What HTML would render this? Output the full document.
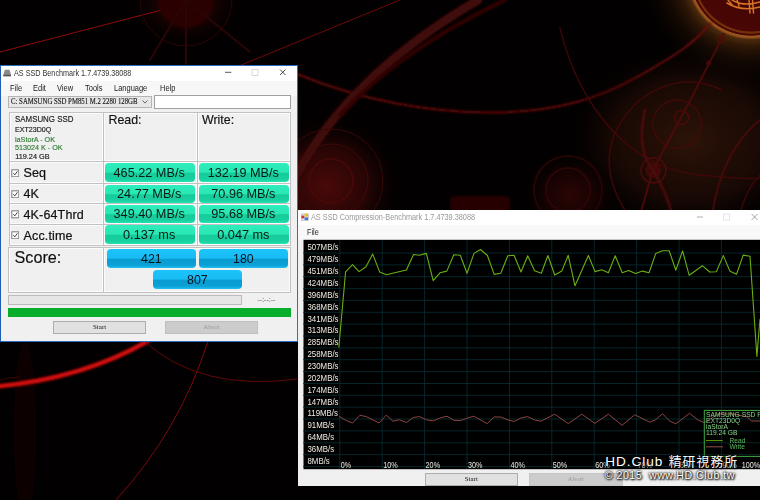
<!DOCTYPE html>
<html><head><meta charset="utf-8"><title>AS SSD Benchmark</title>
<style>
html,body{margin:0;padding:0;background:#000;}
body{width:760px;height:500px;overflow:hidden;position:relative;font-family:"Liberation Sans",sans-serif;}
.abs{position:absolute;}
#bg{position:absolute;left:0;top:0;width:760px;height:500px;}
/* ---------- window 1 ---------- */
#w1{position:absolute;left:0;top:65.3px;width:295.6px;height:274.4px;border:1px solid #2a6cc4;border-left-color:#1f5fb0;border-right-color:#4a6a9c;background:#f0f0f0;filter:blur(.3px);}
#w1 .title{position:absolute;left:0;top:0;width:100%;height:14.5px;background:#fff;}
#w1 .title span{position:absolute;left:12.8px;top:2.6px;font-size:8.2px;color:#333;white-space:nowrap;transform:scaleX(.883);transform-origin:0 0;}
#w1 .menu{position:absolute;left:0;top:14.5px;width:100%;height:15px;background:#f7f7f7;font-size:8.6px;color:#1a1a1a;}
#w1 .menu span{position:absolute;top:2px;transform:scaleX(.87);transform-origin:0 0;}
.t{position:absolute;white-space:nowrap;line-height:1;}
#w1 .t{-webkit-text-stroke:.15px currentColor;}
.combo{position:absolute;left:7px;top:29.4px;width:141.5px;height:10px;border:1px solid #b4b4b4;background:#e7e7e7;}
.tbox{position:absolute;left:152.8px;top:29.2px;width:135.2px;height:11.2px;border:1px solid #a0a0a0;background:#fff;}
.serif{font-family:"Liberation Serif",serif;}
.cell{position:absolute;background:#f0f0f0;border:1px solid #c2c2c2;box-shadow:inset 0 0 0 1px rgba(255,255,255,.75);}
.gbtn{position:absolute;height:20.2px;width:89.5px;border-radius:4px;background:linear-gradient(#2eecbc 0%,#2ae8b4 48%,#16cc9a 54%,#18cfa0 85%,#24e4b0 100%);color:#0a1a14;font-size:12.7px;text-align:center;text-indent:-1.2px;white-space:nowrap;}
.bbtn{position:absolute;height:19.4px;width:88.4px;border-radius:4px;background:linear-gradient(#1cc4fa 0%,#18bcf4 48%,#0a9cd0 54%,#0ca0d6 85%,#20c0f0 100%);color:#06141c;font-size:12.4px;text-align:center;line-height:20px;}
.cb{position:absolute;left:10px;width:6.4px;height:6.4px;border:1px solid #555;background:#fff;font-size:7px;line-height:6px;color:#1a1a1a;text-align:center;}
.rowl{-webkit-text-stroke:.22px #111;position:absolute;left:22.5px;font-size:12.5px;letter-spacing:.15px;color:#111;white-space:nowrap;}
.btn{position:absolute;border:1px solid #adadad;background:#e1e1e1;font-family:"Liberation Serif",serif;font-size:7px;text-align:center;color:#111;}
/* ---------- window 2 ---------- */
#w2{position:absolute;left:297.5px;top:209.6px;width:470px;height:276.8px;background:#f0f0f0;filter:blur(.3px);}
#w2 .title{position:absolute;left:0;top:0;width:100%;height:15.5px;background:#fff;}
#w2 .menu{position:absolute;left:0;top:15.5px;width:100%;height:15px;background:#f8f8f8;}
svg text{font-family:"Liberation Sans",sans-serif;}
</style></head><body>
<!-- wallpaper -->
<svg id="bg" viewBox="0 0 760 500">
<defs>
<radialGradient id="g1" cx="751" cy="-25" r="112" gradientUnits="userSpaceOnUse"><stop offset="0" stop-color="#400303"/><stop offset="0.5000" stop-color="#480704"/><stop offset="0.5089" stop-color="#743008"/><stop offset="0.5205" stop-color="#743008"/><stop offset="0.5268" stop-color="#480905"/><stop offset="0.5384" stop-color="#480905"/><stop offset="0.5446" stop-color="#9a561e"/><stop offset="0.5589" stop-color="#94501c"/><stop offset="0.5759" stop-color="#4c2a0b"/><stop offset="0.6429" stop-color="#321907" stop-opacity=".9"/><stop offset="0.7679" stop-color="#1e0e04" stop-opacity=".6"/><stop offset="1" stop-color="#0a0401" stop-opacity="0"/></radialGradient>
<radialGradient id="g2" cx="0.5" cy="0.5" r="0.5"><stop offset="0" stop-color="#4a0909"/><stop offset="0.5" stop-color="#300606" stop-opacity=".85"/><stop offset="1" stop-color="#000" stop-opacity="0"/></radialGradient>
<radialGradient id="g3" cx="0.5" cy="0.5" r="0.5"><stop offset="0" stop-color="#2c0505"/><stop offset="0.5" stop-color="#1c0303" stop-opacity=".8"/><stop offset="1" stop-color="#000" stop-opacity="0"/></radialGradient>
<radialGradient id="g4" cx="0.5" cy="0.5" r="0.5"><stop offset="0" stop-color="#2c1308"/><stop offset="0.6" stop-color="#1c0a05" stop-opacity=".85"/><stop offset="1" stop-color="#000" stop-opacity="0"/></radialGradient>
<filter id="bl"><feGaussianBlur stdDeviation="1"/></filter>
<filter id="bl2"><feGaussianBlur stdDeviation="2.5"/></filter>
</defs>
<rect width="760" height="500" fill="#020000"/>
<!-- hazes -->
<ellipse cx="690" cy="140" rx="130" ry="100" fill="url(#g4)"/>
<circle cx="751" cy="-25" r="112" fill="url(#g1)"/>
<ellipse cx="186" cy="2" rx="60" ry="48" fill="url(#g3)"/>
<ellipse cx="326" cy="186" rx="80" ry="74" fill="url(#g2)"/>
<ellipse cx="570" cy="195" rx="50" ry="45" fill="url(#g3)"/>
<ellipse cx="25" cy="430" rx="11" ry="90" fill="#100202" filter="url(#bl2)"/>
<g fill="none" stroke-linecap="round">
<!-- top-left lines -->
<path d="M0 52 L200 0" stroke="#900a0a" stroke-width="1"/>
<path d="M229 70 L400 0" stroke="#700808" stroke-width="1"/>
<circle cx="186" cy="0" r="28" fill="#2a0404" stroke="none" filter="url(#bl)"/>
<circle cx="186" cy="0" r="46" stroke="#2c0505" stroke-width="1"/>
<path d="M186 0L150 60M186 0L186 64M186 0L250 52" stroke="#2a0505" stroke-width="2"/>
<!-- bottom-left -->
<path d="M-10 387 Q80 380 148 341" stroke="#d40a0a" stroke-width="4.5" filter="url(#bl)"/>
<path d="M144 341 Q200 392 297 379" stroke="#600808" stroke-width="1"/>
<path d="M208 341 Q180 430 116 500" stroke="#7c0a0a" stroke-width="1"/>
<path d="M0 380 Q10 377 20 377" stroke="#3a0505" stroke-width="1"/>
<!-- middle top -->
<path d="M297 74 C360 100 430 113 494 112.500 S600 98 639 76 S694 43 711 23" stroke="#6a0a0a" stroke-width="2" filter="url(#bl)"/>
<path d="M297 174 Q350 75 478 0" stroke="#400707" stroke-width="9" filter="url(#bl)"/>
<path d="M340 115 Q400 50 505 0" stroke="#340606" stroke-width="4" filter="url(#bl)"/>
<circle cx="331" cy="181" r="22" stroke="#4a0909" stroke-width="1.5"/>
<circle cx="331" cy="181" r="37" stroke="#400808" stroke-width="1"/>
<circle cx="331" cy="181" r="52" stroke="#380707" stroke-width="1"/>
<rect x="450" y="196" width="60" height="16" rx="5" fill="#260505" stroke="none" filter="url(#bl)"/>
<circle cx="568" cy="190" r="22" stroke="#2c0505" stroke-width="2"/>
<circle cx="568" cy="190" r="34" stroke="#260404" stroke-width="2"/>
<!-- right -->
<g opacity=".78">
<path d="M560 28 Q575 90 612 130 T700 175 T760 178" stroke="#480808" stroke-width="1.5"/>
<circle cx="677" cy="124" r="24" stroke="#4c0909" stroke-width="1.3"/>
<circle cx="681.6" cy="117.6" r="7" stroke="#520a0a" stroke-width="1.5"/>
<circle cx="653.4" cy="170.3" r="12.5" stroke="#5a0a0a" stroke-width="1.5"/>
<circle cx="653.4" cy="170.3" r="8" fill="#4a0808" stroke="none"/>
<path d="M724 34 L693 95 L653 170 L640 215" stroke="#560a0a" stroke-width="2"/><circle cx="720.8" cy="39" r="4" stroke="#5a0c08" stroke-width="1.3"/><circle cx="708.8" cy="63" r="2.5" fill="#5a0a0a" stroke="none"/>
<path d="M645 110 Q636 150 653 170 Q668 195 672 215" stroke="#520a0a" stroke-width="3" filter="url(#bl)"/>
<path d="M628 215 Q585 150 640 100 Q680 70 722 90" stroke="#480808" stroke-width="1.5"/>
<path d="M712 215 Q722 150 760 120" stroke="#500a0a" stroke-width="2"/>
<path d="M740 215 Q745 190 760 175" stroke="#480808" stroke-width="1.5"/>
</g>
<!-- orange ornament -->
<path d="M727 3 Q742 12 760 7 M732 0 Q744 7 760 2 M749 0 L750 13 M752.5 0 L753.5 13 M728 0 L733 6 M737 0 L739 6" stroke="#e07828" stroke-width="1.5" opacity=".95"/>
</g>
</svg>

<!-- ================= WINDOW 1 ================= -->
<div id="w1">
 <div class="title">
  <svg class="abs" style="left:2px;top:2.6px" width="8.4" height="8" viewBox="0 0 9 8"><path d="M2 0.5h5l1.6 5.5v1.6h-8.2v-1.6z" fill="#8a8a8a"/><path d="M0.4 6h8.2v1.6h-8.2z" fill="#555"/></svg>
  <span>AS SSD Benchmark 1.7.4739.38088</span>
  <svg class="abs" style="left:223px;top:2px" width="66" height="9" viewBox="0 0 66 9"><g fill="none"><path d="M1 4.3h6.4" stroke="#333" stroke-width=".8"/><rect x="28" y="1.5" width="6" height="6" stroke="#d4d4d4" stroke-width=".9"/><path d="M56 1.5l5.5 5.5M61.500 1.5l-5.5 5.5" stroke="#2a2a2a" stroke-width=".85"/></g></svg>
 </div>
 <div class="menu"><span style="left:9px">File</span><span style="left:32px">Edit</span><span style="left:56px">View</span><span style="left:83.5px">Tools</span><span style="left:113px">Language</span><span style="left:158.5px">Help</span></div>
 <div class="combo"><span class="t serif" style="left:1.5px;top:1.5px;font-size:7.4px;color:#1a1a1a;transform:scaleX(.918);transform-origin:0 0;">C: SAMSUNG SSD PM851 M.2 2280 128GB</span>
  <svg class="abs" style="left:133px;top:3px" width="6" height="4" viewBox="0 0 6 4"><path d="M.5 .5l2.5 2.6l2.5-2.6" fill="none" stroke="#444" stroke-width=".8"/></svg></div>
 <div class="tbox"></div>

 <!-- table -->
 <div class="cell" style="left:8.0px;top:45.5px;width:92.7px;height:48.6px"></div>
 <div class="cell" style="left:101.7px;top:45.5px;width:93.1px;height:48.6px"></div>
 <div class="cell" style="left:195.8px;top:45.5px;width:92.4px;height:48.6px"></div>
 <div class="cell" style="left:8.0px;top:95.1px;width:92.7px;height:21.1px"></div>
 <div class="cell" style="left:101.7px;top:95.1px;width:93.1px;height:21.1px"></div>
 <div class="cell" style="left:195.8px;top:95.1px;width:92.4px;height:21.1px"></div>
 <div class="cell" style="left:8.0px;top:117.2px;width:92.7px;height:19.0px"></div>
 <div class="cell" style="left:101.7px;top:117.2px;width:93.1px;height:19.0px"></div>
 <div class="cell" style="left:195.8px;top:117.2px;width:92.4px;height:19.0px"></div>
 <div class="cell" style="left:8.0px;top:137.2px;width:92.7px;height:19.3px"></div>
 <div class="cell" style="left:101.7px;top:137.2px;width:93.1px;height:19.3px"></div>
 <div class="cell" style="left:195.8px;top:137.2px;width:92.4px;height:19.3px"></div>
 <div class="cell" style="left:8.0px;top:157.5px;width:92.7px;height:20.0px"></div>
 <div class="cell" style="left:101.7px;top:157.5px;width:93.1px;height:20.0px"></div>
 <div class="cell" style="left:195.8px;top:157.5px;width:92.4px;height:20.0px"></div>
 <div class="cell" style="left:7.0px;top:180.5px;width:93.9px;height:44.7px"></div>
 <div class="cell" style="left:101.9px;top:180.5px;width:186.4px;height:44.7px"></div>

 <span class="t" style="left:14px;top:49.2px;font-size:8.6px;color:#1a1a1a;transform:scaleX(.92);transform-origin:0 0;">SAMSUNG SSD</span>
 <span class="t" style="left:14px;top:61px;font-size:7.1px;color:#1a1a1a;">EXT23D0Q</span>
 <span class="t" style="left:14px;top:69.7px;font-size:7.2px;color:#2e7d32;">iaStorA - OK</span>
 <span class="t" style="left:14px;top:78.1px;font-size:7.2px;color:#2e7d32;">513024 K - OK</span>
 <span class="t" style="left:14.2px;top:87.1px;font-size:7.3px;color:#1a1a1a;">119.24 GB</span>
 <span class="t" style="left:107.5px;top:48.1px;font-size:12.4px;color:#111;">Read:</span>
 <span class="t" style="left:201px;top:48.1px;font-size:12.4px;color:#111;">Write:</span>

 <svg class="abs" style="left:9.6px;top:102.3px" width="8.6" height="8.6" viewBox="0 0 8.6 8.6"><rect x=".8" y=".8" width="7" height="7" fill="#fdfdfd" stroke="#7c7c7c" stroke-width="1"/><path d="M2.3 4.2l1.5 1.7l2.6-3.6" fill="none" stroke="#333" stroke-width=".9"/></svg><span class="rowl" style="top:99.7px">Seq</span>
 <svg class="abs" style="left:9.6px;top:123.3px" width="8.6" height="8.6" viewBox="0 0 8.6 8.6"><rect x=".8" y=".8" width="7" height="7" fill="#fdfdfd" stroke="#7c7c7c" stroke-width="1"/><path d="M2.3 4.2l1.5 1.7l2.6-3.6" fill="none" stroke="#333" stroke-width=".9"/></svg><span class="rowl" style="top:121px">4K</span>
 <svg class="abs" style="left:9.6px;top:143.8px" width="8.6" height="8.6" viewBox="0 0 8.6 8.6"><rect x=".8" y=".8" width="7" height="7" fill="#fdfdfd" stroke="#7c7c7c" stroke-width="1"/><path d="M2.3 4.2l1.5 1.7l2.6-3.6" fill="none" stroke="#333" stroke-width=".9"/></svg><span class="rowl" style="top:141.3px">4K-64Thrd</span>
 <svg class="abs" style="left:9.6px;top:164.3px" width="8.6" height="8.6" viewBox="0 0 8.6 8.6"><rect x=".8" y=".8" width="7" height="7" fill="#fdfdfd" stroke="#7c7c7c" stroke-width="1"/><path d="M2.3 4.2l1.5 1.7l2.6-3.6" fill="none" stroke="#333" stroke-width=".9"/></svg><span class="rowl" style="top:162.3px">Acc.time</span>

 <div class="gbtn" style="left:104px;top:96.3px;height:19.7px;line-height:21.0px">465.22 MB/s</div><div class="gbtn" style="left:198.2px;top:96.3px;height:19.7px;line-height:21.0px">132.19 MB/s</div>
 <div class="gbtn" style="left:104px;top:118.5px;height:18.2px;line-height:19.5px">24.77 MB/s</div><div class="gbtn" style="left:198.2px;top:118.5px;height:18.2px;line-height:19.5px">70.96 MB/s</div>
 <div class="gbtn" style="left:104px;top:138.7px;height:18.3px;line-height:19.6px">349.40 MB/s</div><div class="gbtn" style="left:198.2px;top:138.7px;height:18.3px;line-height:19.6px">95.68 MB/s</div>
 <div class="gbtn" style="left:104px;top:158.7px;height:19.3px;line-height:20.6px">0.137 ms</div><div class="gbtn" style="left:198.2px;top:158.7px;height:19.3px;line-height:20.6px">0.047 ms</div>

 <span class="t" style="left:13.5px;top:182.8px;font-size:16.2px;color:#111;">Score:</span>
 <div class="bbtn" style="left:106.2px;top:182.7px">421</div><div class="bbtn" style="left:198.2px;top:182.7px">180</div>
 <div class="bbtn" style="left:152.2px;top:203.3px">807</div>

 <div class="abs" style="left:6.8px;top:229px;width:232.5px;height:7.6px;border:1px solid #bcbcbc;background:#e6e6e6"></div>
 <span class="t" style="left:256.5px;top:229.8px;font-size:7px;color:#666;">--:--:--</span>
 <div class="abs" style="left:6.8px;top:241.8px;width:283.5px;height:9px;background:#09ad2c"></div>
 <div class="btn" style="left:52.2px;top:254.7px;width:90.8px;height:11px;line-height:11px">Start</div>
 <div class="btn" style="left:164px;top:254.7px;width:90.8px;height:11px;line-height:11px;background:#cccccc;border-color:#bfbfbf;color:#9a9a9a">Abort</div>
</div>

<!-- ================= WINDOW 2 ================= -->
<div id="w2">
 <div class="title">
  <svg class="abs" style="left:3px;top:3.5px" width="8" height="8" viewBox="0 0 8 8"><rect x="0" y="1" width="7.5" height="6.5" fill="#e8e8f0" stroke="#99a" stroke-width=".5"/><rect x="0.4" y="2.6" width="3" height="2.8" fill="#d03030"/><rect x="3.6" y="0.6" width="3.4" height="3" fill="#f0c020"/><rect x="3.6" y="4.4" width="3.4" height="2.6" fill="#3080e0"/></svg>
  <span class="t" style="left:13.5px;top:3.3px;font-size:8.4px;color:#999;transform:scaleX(.872);transform-origin:0 0;">AS SSD Compression-Benchmark 1.7.4739.38088</span>
  <svg class="abs" style="left:398px;top:3.5px" width="66" height="9" viewBox="0 0 66 9"><g fill="none"><path d="M0.8 4h6.2" stroke="#999" stroke-width=".8"/><rect x="27.6" y="1" width="6" height="6" stroke="#e2e2e2" stroke-width=".9"/><path d="M55.6 1l6 6M61.6 1l-6 6" stroke="#8a8a8a" stroke-width=".8"/></g></svg>
 </div>
 <div class="menu"><span class="t" style="left:9px;top:3.1px;font-size:8.6px;color:#2a2424;transform:scaleX(.85);transform-origin:0 0;">File</span></div>
 <div class="btn" style="left:127.5px;top:263.2px;width:90.5px;height:11px;line-height:11px">Start</div>
 <div class="btn" style="left:231.5px;top:263.2px;width:91.5px;height:11px;line-height:11px;background:#cccccc;border-color:#c4c4c4;color:#9a9a9a">Abort</div>
</div>
<!-- chart -->
<svg class="abs" style="left:0;top:0;filter:blur(.3px)" width="760" height="500" viewBox="0 0 760 500">
 <rect x="303.5" y="239.8" width="460" height="229.4" fill="#000"/>
 <g stroke="#092e33" stroke-width=".8"><line x1="303" x2="760" y1="253.0" y2="253.0"/><line x1="303" x2="760" y1="264.9" y2="264.9"/><line x1="303" x2="760" y1="276.7" y2="276.7"/><line x1="303" x2="760" y1="288.6" y2="288.6"/><line x1="303" x2="760" y1="300.4" y2="300.4"/><line x1="303" x2="760" y1="312.3" y2="312.3"/><line x1="303" x2="760" y1="324.2" y2="324.2"/><line x1="303" x2="760" y1="336.0" y2="336.0"/><line x1="303" x2="760" y1="347.9" y2="347.9"/><line x1="303" x2="760" y1="359.7" y2="359.7"/><line x1="303" x2="760" y1="371.6" y2="371.6"/><line x1="303" x2="760" y1="383.5" y2="383.5"/><line x1="303" x2="760" y1="395.3" y2="395.3"/><line x1="303" x2="760" y1="407.2" y2="407.2"/><line x1="303" x2="760" y1="419.0" y2="419.0"/><line x1="303" x2="760" y1="430.9" y2="430.9"/><line x1="303" x2="760" y1="442.8" y2="442.8"/><line x1="303" x2="760" y1="454.6" y2="454.6"/><line x1="303" x2="760" y1="466.5" y2="466.5"/><line x1="339.8" x2="339.8" y1="240" y2="469"/><line x1="382.2" x2="382.2" y1="240" y2="469"/><line x1="424.6" x2="424.6" y1="240" y2="469"/><line x1="467.0" x2="467.0" y1="240" y2="469"/><line x1="509.4" x2="509.4" y1="240" y2="469"/><line x1="551.8" x2="551.8" y1="240" y2="469"/><line x1="594.2" x2="594.2" y1="240" y2="469"/><line x1="636.6" x2="636.6" y1="240" y2="469"/><line x1="679.0" x2="679.0" y1="240" y2="469"/><line x1="721.4" x2="721.4" y1="240" y2="469"/><line x1="763.8" x2="763.8" y1="240" y2="469"/></g>
 <g font-size="8.6" fill="#f1ebe2" transform="translate(307.3 0) scale(.915 1) translate(-307.3 0)"><text x="307.5" y="250.5">507MB/s</text><text x="307.5" y="262.4">479MB/s</text><text x="307.5" y="274.2">451MB/s</text><text x="307.5" y="286.1">424MB/s</text><text x="307.5" y="297.9">396MB/s</text><text x="307.5" y="309.8">368MB/s</text><text x="307.5" y="321.7">341MB/s</text><text x="307.5" y="333.5">313MB/s</text><text x="307.5" y="345.4">285MB/s</text><text x="307.5" y="357.2">258MB/s</text><text x="307.5" y="369.1">230MB/s</text><text x="307.5" y="381.0">202MB/s</text><text x="307.5" y="392.8">174MB/s</text><text x="307.5" y="404.7">147MB/s</text><text x="307.5" y="416.5">119MB/s</text><text x="307.5" y="428.4">91MB/s</text><text x="307.5" y="440.3">64MB/s</text><text x="307.5" y="452.1">36MB/s</text><text x="307.5" y="464.0">8MB/s</text></g>
 <g font-size="8.6" fill="#ebe5dc"><text x="340.8" y="467.6" textLength="10.4" lengthAdjust="spacingAndGlyphs">0%</text><text x="383.2" y="467.6" textLength="14.5" lengthAdjust="spacingAndGlyphs">10%</text><text x="425.6" y="467.6" textLength="14.5" lengthAdjust="spacingAndGlyphs">20%</text><text x="468.0" y="467.6" textLength="14.5" lengthAdjust="spacingAndGlyphs">30%</text><text x="510.4" y="467.6" textLength="14.5" lengthAdjust="spacingAndGlyphs">40%</text><text x="552.8" y="467.6" textLength="14.5" lengthAdjust="spacingAndGlyphs">50%</text><text x="595.2" y="467.6" textLength="14.5" lengthAdjust="spacingAndGlyphs">60%</text><text x="637.6" y="467.6" textLength="14.5" lengthAdjust="spacingAndGlyphs">70%</text><text x="680.0" y="467.6" textLength="14.5" lengthAdjust="spacingAndGlyphs">80%</text><text x="722.4" y="467.6" textLength="14.5" lengthAdjust="spacingAndGlyphs">90%</text><text x="741.8" y="467.6" textLength="18.5" lengthAdjust="spacingAndGlyphs">100%</text></g>
 <polyline points="339.0,416.2 345.7,420.3 352.5,423.0 359.9,415.3 366.3,416.6 379.2,423.0 386.2,415.1 393.0,421.2 399.5,419.7 406.5,422.5 413.3,417.5 419.7,416.6 426.7,419.9 433.5,420.8 440.3,417.9 447.0,416.2 453.8,420.3 460.2,420.6 467.6,418.0 473.8,416.2 487.1,423.6 494.3,416.9 500.9,417.1 507.8,419.9 514.2,421.5 521.2,417.9 527.6,416.6 534.5,419.9 541.0,421.2 554.7,414.2 568.2,423.6 581.8,414.2 594.9,423.4 608.3,414.2 622.1,425.3 634.7,414.7 649.5,422.1 655.2,420.0 662.5,413.7 669.5,421.0 675.8,423.8 689.5,413.3 697.9,420.0 704.6,422.7 718.0,414.0 733.0,414.0 747.0,416.8 751.6,421.0 760.0,421.0" fill="none" stroke="#8c4444" stroke-width="1"/>
 <polyline points="338.8,347.5 345.6,271.8 352.5,264.6 359.1,271.6 366.0,266.7 372.7,254.1 379.7,272.1 386.3,274.7 406.4,270.0 413.5,254.5 419.5,255.3 426.3,253.4 433.2,280.6 440.0,272.8 446.8,271.1 453.8,254.7 460.3,255.3 467.0,273.2 474.0,253.4 480.5,249.5 487.4,255.5 494.2,274.4 500.8,273.2 507.8,255.8 514.0,255.3 521.0,272.0 527.7,255.8 534.6,270.8 541.3,273.2 547.9,255.5 554.7,275.0 561.8,271.1 568.2,255.3 575.0,285.8 588.4,255.5 595.0,271.6 601.6,269.7 608.4,272.7 615.2,255.8 622.2,272.8 628.6,270.5 635.7,273.5 642.4,271.1 649.0,272.8 655.8,253.4 662.6,250.7 669.2,250.7 675.8,270.3 682.6,250.9 689.2,275.3 702.4,265.7 709.6,272.0 716.3,271.7 723.3,255.6 730.0,271.2 736.5,274.3 743.2,255.1 750.0,256.3 756.9,356.4 760.0,319.0" fill="none" stroke="#6aae10" stroke-width="1.1" stroke-linejoin="round"/>
 <!-- legend -->
 <rect x="704.3" y="410.4" width="60" height="46" fill="none" stroke="#3fa83f" stroke-width="1"/>
 <g font-size="6.7" fill="#86d286">
  <text x="706" y="417">SAMSUNG SSD PM851</text>
  <text x="706" y="422.9">EXT23D0Q</text>
  <text x="706" y="428.8">iaStorA</text>
  <text x="706" y="434.5">119.24 GB</text>
  <text x="729.4" y="443.4" fill="#5cbc5c">Read</text>
  <text x="729.4" y="449.4" fill="#5cbc5c">Write</text>
 </g>
 <line x1="706" x2="722.8" y1="440.6" y2="440.6" stroke="#5f9e08" stroke-width="1"/>
 <line x1="706" x2="722.8" y1="446.8" y2="446.8" stroke="#955050" stroke-width="1"/>
</svg>
<!-- watermark -->
<div class="t" style="left:605.3px;top:455.4px;font-size:13.6px;color:#fff;letter-spacing:.95px;text-shadow:0 0 2px #000,0 0 3px #000,1px 1px 2px #000;font-family:'Liberation Sans','Noto Sans CJK TC',sans-serif;">HD.Club <span style="font-size:12.7px;letter-spacing:1.25px;margin-left:.6px">精研視務所</span></div>
<div class="t" style="left:604.8px;top:469.8px;font-size:10.6px;color:#fff;letter-spacing:.5px;text-shadow:0 0 2px #000,0 0 3px #000,1px 1px 2px #000;white-space:pre;">© 2015  www.HD.Club.tw</div>
</body></html>
